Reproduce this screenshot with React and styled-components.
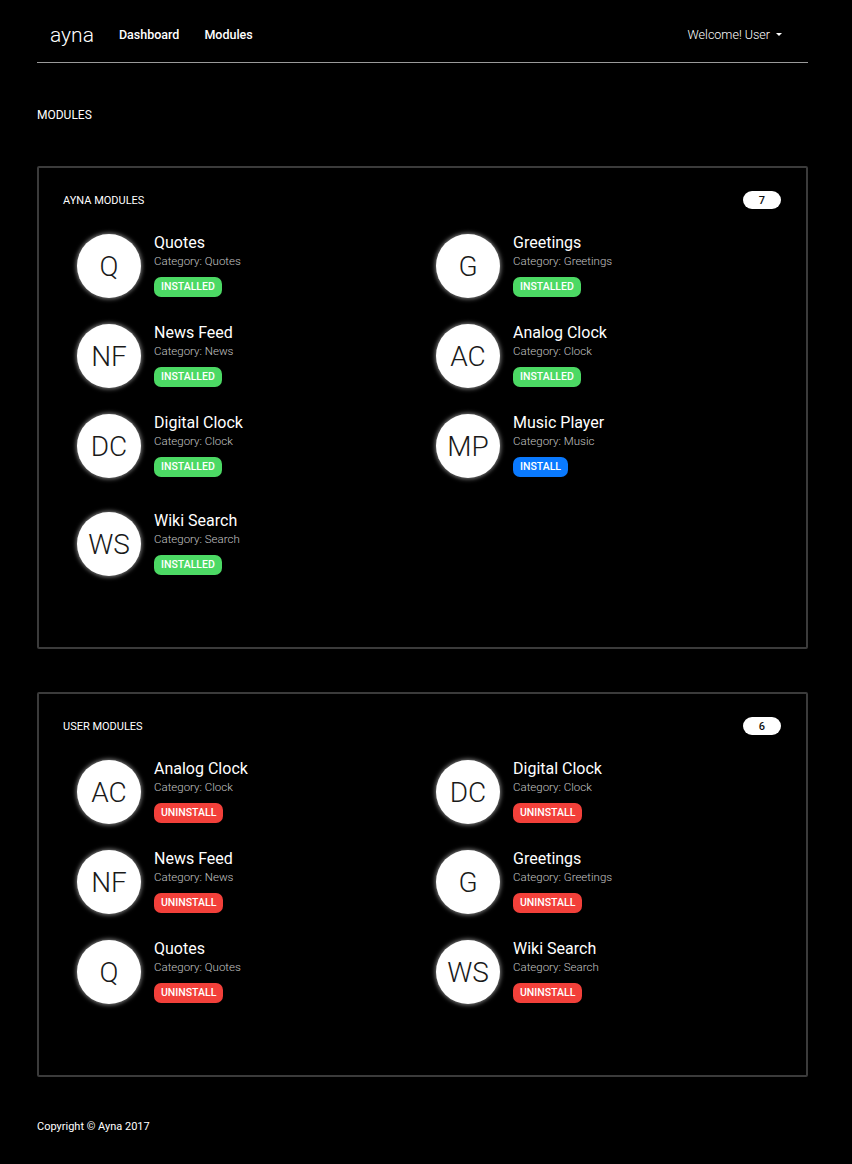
import styled, { createGlobalStyle } from "styled-components";

const GlobalStyle = createGlobalStyle`
  body {
    margin: 0;
    background: #000;
    color: #fff;
    font-family: Roboto, "Liberation Sans", sans-serif;
  }
`;

const Page = styled.div`
  width: 771px;
  padding: 0 0 36px 37px;
`;

const Navbar = styled.nav`
  display: flex;
  align-items: center;
  height: 56px;
  padding: 6px 26px 0 13px;
  border-bottom: 1px solid #9a9a9a;
`;

const Brand = styled.span`
  font-size: 21px;
  font-weight: 300;
  margin-right: 25px;
  margin-top: 1px;
`;

const NavLink = styled.a`
  font-size: 12.5px;
  font-weight: 500;
  color: #fff;
  margin-right: 25px;
`;

const UserMenu = styled.div`
  margin-left: auto;
  font-size: 12.5px;
  font-weight: 300;
  display: flex;
  align-items: center;
  &::after {
    content: "";
    margin-left: 6px;
    border-top: 3px solid #fff;
    border-left: 3px solid transparent;
    border-right: 3px solid transparent;
  }
`;

const Heading = styled.h1`
  margin: 44px 0 43px;
  font-size: 12px;
  font-weight: 400;
  line-height: 16px;
`;

const Card = styled.section`
  border: 2px solid #3b3b3b;
  border-radius: 2px;
  padding: 23px 25px 71px 24px;
  margin-bottom: 43px;
`;

const CardHeader = styled.div`
  display: flex;
  align-items: center;
  justify-content: space-between;
  height: 18px;
  margin-bottom: 25px;
`;

const CardTitle = styled.span`
  font-size: 11px;
  font-weight: 400;
`;

const Count = styled.span`
  background: #fff;
  color: #111;
  font-size: 11px;
  font-weight: 500;
  border-radius: 9px;
  width: 38px;
  height: 18px;
  display: flex;
  align-items: center;
  justify-content: center;
`;

const Grid = styled.div`
  display: grid;
  grid-template-columns: 359px 359px;
  row-gap: 26px;
  padding-left: 14px;
  & + & {
    margin-top: 34px;
  }
`;

const Item = styled.div`
  display: flex;
  align-items: flex-start;
`;

const Avatar = styled.div`
  width: 64px;
  height: 64px;
  border-radius: 50%;
  background: #fff;
  color: #1a1a1a;
  box-shadow: 0 0 4px 1px rgba(255, 255, 255, 0.5);
  display: flex;
  align-items: center;
  justify-content: center;
  font-size: 28px;
  font-weight: 300;
  flex-shrink: 0;
  margin-right: 13px;
`;

const Info = styled.div`
  display: flex;
  flex-direction: column;
  align-items: flex-start;
  margin-top: -1px;
`;

const Name = styled.div`
  font-size: 16px;
  font-weight: 400;
  line-height: 20px;
`;

const Category = styled.div`
  font-size: 11.5px;
  font-weight: 300;
  color: #c4c4c4;
  line-height: 14px;
  margin-top: 1px;
`;

const colors = {
  installed: "#4cd964",
  install: "#0a7aff",
  uninstall: "#f2403a",
};

const Badge = styled.span`
  margin-top: 9px;
  background: ${(p) => colors[p.$kind]};
  color: #fff;
  font-size: 10.5px;
  font-weight: 500;
  line-height: 20px;
  padding: 0 7px;
  border-radius: 7px;
  text-transform: uppercase;
`;

const ayna = [
  [
    ["Q", "Quotes", "Quotes", "installed"],
    ["G", "Greetings", "Greetings", "installed"],
    ["NF", "News Feed", "News", "installed"],
    ["AC", "Analog Clock", "Clock", "installed"],
    ["DC", "Digital Clock", "Clock", "installed"],
    ["MP", "Music Player", "Music", "install"],
  ],
  [["WS", "Wiki Search", "Search", "installed"]],
];

const user = [
  [
    ["AC", "Analog Clock", "Clock", "uninstall"],
    ["DC", "Digital Clock", "Clock", "uninstall"],
    ["NF", "News Feed", "News", "uninstall"],
    ["G", "Greetings", "Greetings", "uninstall"],
    ["Q", "Quotes", "Quotes", "uninstall"],
    ["WS", "Wiki Search", "Search", "uninstall"],
  ],
];

const ModuleCard = ({ title, count, groups }) => (
  <Card>
    <CardHeader>
      <CardTitle>{title}</CardTitle>
      <Count>{count}</Count>
    </CardHeader>
    {groups.map((group, gi) => (
      <Grid key={gi}>
        {group.map(([initials, name, cat, kind]) => (
          <Item key={name}>
            <Avatar>{initials}</Avatar>
            <Info>
              <Name>{name}</Name>
              <Category>Category: {cat}</Category>
              <Badge $kind={kind}>{kind}</Badge>
            </Info>
          </Item>
        ))}
      </Grid>
    ))}
  </Card>
);

const Footer = styled.footer`
  font-size: 11px;
  font-weight: 400;
`;

export default function App() {
  return (
    <>
      <GlobalStyle />
      <Page>
        <Navbar>
          <Brand>ayna</Brand>
          <NavLink>Dashboard</NavLink>
          <NavLink>Modules</NavLink>
          <UserMenu>Welcome! User</UserMenu>
        </Navbar>
        <Heading>MODULES</Heading>
        <ModuleCard title="AYNA MODULES" count={7} groups={ayna} />
        <ModuleCard title="USER MODULES" count={6} groups={user} />
        <Footer>Copyright © Ayna 2017</Footer>
      </Page>
    </>
  );
}
